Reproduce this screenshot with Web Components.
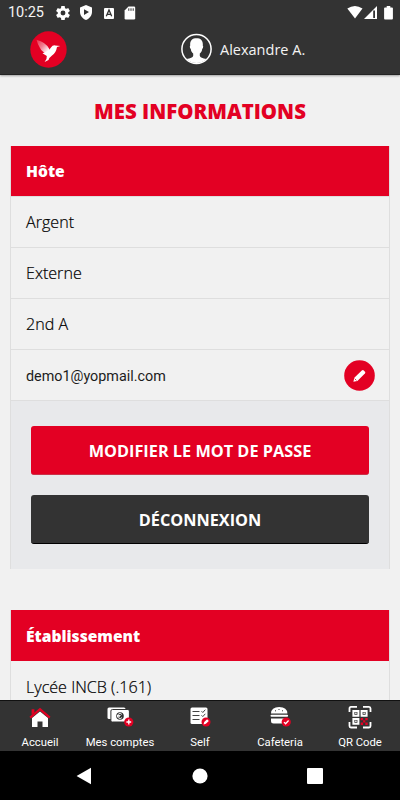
<!DOCTYPE html>
<html lang="fr">
<head>
<meta charset="utf-8">
<meta name="viewport" content="width=device-width, initial-scale=1">
<title>Mes informations</title>
<style>
  html, body {
    margin: 0;
    height: 100%;
    overflow: hidden;
  }
  body {
    font-family: "Open Sans", "Noto Sans", sans-serif;
    background: #f1f1f1;
    --red: #e30023;
    --dark: #333;
    --line: #dedede;
  }
</style>
</head>
<body>
<account-app></account-app>

<script>
const define = (name, html, setup) => {
  const template = document.createElement("template");
  template.innerHTML = html;

  window.customElements.define(name, class extends HTMLElement {
    constructor() {
      super();
      this._sR = this.attachShadow({ mode: "open" });
      this._sR.appendChild(template.content.cloneNode(true));
    }

    connectedCallback() {
      if (setup) setup(this, this._sR);
    }
  });
};

define("status-bar", `
  <style>
    :host {
      display: flex;
      align-items: center;
      height: 24px;
      padding: 1px 7px 0 8px;
      box-sizing: border-box;
      color: #f4f4f4;
      font: 14.5px Roboto, sans-serif;
    }
    svg { display: block; fill: #fff; }
    .time { width: 47.5px; letter-spacing: -0.05px; }
    .left { display: flex; align-items: center; gap: 9.5px; }
    .right { display: flex; align-items: center; margin-left: auto; }
  </style>
  <span class="time">10:25</span>
  <div class="left">
    <svg width="14" height="14" viewBox="2 2 20 20"><path d="M19.43 12.98c.04-.32.07-.64.07-.98s-.03-.66-.07-.98l2.11-1.65c.19-.15.24-.42.12-.64l-2-3.46c-.12-.22-.39-.3-.61-.22l-2.49 1c-.52-.4-1.08-.73-1.69-.98l-.38-2.65C14.46 2.18 14.25 2 14 2h-4c-.25 0-.46.18-.49.42l-.38 2.65c-.61.25-1.17.59-1.69.98l-2.49-1c-.23-.09-.49 0-.61.22l-2 3.46c-.13.22-.07.49.12.64l2.11 1.65c-.04.32-.07.65-.07.98s.03.66.07.98l-2.11 1.65c-.19.15-.24.42-.12.64l2 3.46c.12.22.39.3.61.22l2.49-1c.52.4 1.08.73 1.69.98l.38 2.65c.03.24.24.42.49.42h4c.25 0 .46-.18.49-.42l.38-2.65c.61-.25 1.17-.59 1.69-.98l2.49 1c.23.09.49 0 .61-.22l2-3.46c.12-.22.07-.49-.12-.64l-2.11-1.65zM12 15.5A3.5 3.5 0 1 1 12 8.500a3.500 3.500 0 0 1 0 7z"/></svg>
    <svg width="14" height="15" viewBox="0 0 14 15"><path fill-rule="evenodd" d="M7 0L13 2.400V7c0 3.600-2.500 6.700-6 8C3.500 13.700 1 10.600 1 7V2.400zM5 4.200v5.700L10 7z"/></svg>
    <svg width="12" height="12" viewBox="0 0 12 12"><rect x="1" y="1" width="10" height="11" rx="1"/><path d="M3.300 9.200L6 3l2.700 6.200M4.400 7.300h3.200" fill="none" stroke="#333" stroke-width="1.300"/></svg>
    <svg width="12" height="14" viewBox="0 0 12 14"><path d="M4.500.500H10q1.200 0 1.200 1.200v10.600q0 1.200-1.200 1.200H1.800Q.6 13.500.6 12.300V4.500z"/><path d="M4.800 2.300v2.500M7 2.300v2.500M9.200 2.300v2.500" stroke="#333"/></svg>
  </div>
  <div class="right">
    <svg width="16" height="13" viewBox="0 0 16 13"><path d="M.3 2.600Q8-2.400 15.500 2.600L8 12.600z"/></svg>
    <svg width="14" height="13" viewBox="0 0 14 13" style="margin-left:1px"><path d="M0 13L13 0v13z"/><path d="M9.200 4.600H11V12H9.200z" fill="#333"/></svg>
    <svg width="9" height="14" viewBox="0 0 9 14" style="margin-left:6px"><path d="M2.700 0h3.600v1.400H8q.9 0 .9.900v10.300q0 .9-.9.900H1q-.9 0-.9-.9V2.300q0-.9.900-.9h1.700z"/></svg>
  </div>
`);

define("app-header", `
  <style>
    :host {
      display: grid;
      grid-template-columns: 151px 1fr;
      align-items: center;
      height: 51px;
      padding: 0 30px;
      box-sizing: border-box;
      border-bottom: 1px solid #242424;
      color: #f4f4f4;
    }
    svg { display: block; }
    .logo { margin-top: 1px; }
    .user {
      display: flex;
      align-items: center;
      gap: 8px;
      font-size: 14.5px;
      font-weight: 400;
    }
    .name { padding-top: 1px; }
  </style>
  <svg class="logo" width="37" height="37" viewBox="0 0 37 37">
    <defs><linearGradient id="wing" x1="0" y1="0" x2="1" y2="1"><stop offset="0" stop-color="#fff" stop-opacity=".2"/><stop offset=".45" stop-color="#fff" stop-opacity=".5"/><stop offset=".85" stop-color="#fff"/></linearGradient></defs>
    <circle cx="18.500" cy="18.500" r="18.200" fill="#e30023"/>
    <path d="M6.500 8.800Q15.500 11 19.500 18.200L17.500 23Q12 21 10 17Q7.500 13 6.500 8.800z" fill="url(#wing)"/>
    <path d="M16.800 20.500Q20 18.500 21 16.600Q22.500 14 25.200 14.400L30.300 15L27 16Q26 22 22 24.500Q19.500 26.300 18.500 29L14.600 31Q17.300 27.500 16.800 24.900L12.500 22.200z" fill="#fff"/>
  </svg>
  <div class="user">
    <svg width="31" height="32" viewBox="0 0 31 32">
      <defs><clipPath id="face"><circle cx="15.500" cy="16" r="14"/></clipPath></defs>
      <circle cx="15.500" cy="16" r="14.600" fill="none" stroke="#fff" stroke-width="1.500"/>
      <path clip-path="url(#face)" d="M15.500 5.300C11.200 5.300 8.800 7.500 9.200 12.700C8.500 12.800 8.900 15.600 9.800 15.900C10 18 11 19.400 12.200 20.500V23Q11.500 25 5.500 26V32h20v-6Q19.500 25 18.800 23v-2.500C20 19.400 21 18 21.200 15.900C22.100 15.600 22.500 12.800 21.800 12.700C22.200 7.500 19.800 5.300 15.500 5.300z" fill="#fff"/>
    </svg>
    <span class="name"><slot></slot></span>
  </div>
`);

define("info-card", `
  <style>
    :host {
      display: block;
      margin: 0 10px 0;
      border: solid var(--line);
      border-width: 0 1px;
    }
    h2 {
      display: flex;
      align-items: center;
      height: 51px;
      margin: 0;
      padding: 0 15px;
      box-sizing: border-box;
      background: var(--red);
      color: #fff;
      font-size: 15.6px;
      font-weight: 800;
    }
    :host([divided]) h2 { border-bottom: 1px solid var(--line); }
  </style>
  <h2></h2>
  <slot></slot>
`, (el, root) => {
  root.querySelector("h2").textContent = el.getAttribute("heading");
});

define("info-row", `
  <style>
    :host {
      display: flex;
      align-items: center;
      justify-content: space-between;
      height: 51px;
      padding: 0 15px;
      box-sizing: border-box;
      border-bottom: 1px solid var(--line);
      color: #000;
      font-size: 16.1px;
      font-weight: 300;
      -webkit-text-stroke: .2px #000;
    }
    :host([mail]) {
      padding-top: 2px;
      color: #1c1c1c;
      font: 14.35px Roboto, sans-serif;
      -webkit-text-stroke: 0;
    }
  </style>
  <slot></slot>
  <slot name="action"></slot>
`);

define("edit-button", `
  <style>
    :host { display: block; width: 31px; height: 31px; margin: -2px -.5px 0 0; }
    svg { display: block; }
  </style>
  <svg width="31" height="31" viewBox="0 0 31 31">
    <circle cx="15.500" cy="15.500" r="15.300" fill="#e30023"/>
    <path d="M9.400 21.800L10.300 17.700L17.800 10.400Q18.800 9.500 19.800 10.400L21 11.700Q21.800 12.700 20.900 13.600L13.400 21z" fill="#fff"/>
    <path d="M10.700 18.700l1.700 1.700" stroke="#e30023" stroke-width=".8"/>
  </svg>
`);

define("action-button", `
  <style>
    :host { display: block; }
    button {
      display: block;
      width: 100%;
      height: 49px;
      padding: 2px 0 0;
      border: 0;
      border-bottom: 1px solid #ca3148;
      border-radius: 3px;
      background: var(--red);
      color: #fff;
      font: 700 16.3px "Open Sans", sans-serif;
    }
    :host([dark]) button {
      background: var(--dark);
      border-color: #000;
    }
  </style>
  <button><slot></slot></button>
`);

define("action-panel", `
  <style>
    :host {
      display: flex;
      flex-direction: column;
      gap: 20px;
      height: 168px;
      padding: 25px 20px 0;
      box-sizing: border-box;
      background: #e8e9eb;
    }
  </style>
  <slot></slot>
`);

define("tab-item", `
  <style>
    :host {
      display: flex;
      flex-direction: column;
      align-items: center;
      color: #fff;
      font: 11.3px/14px Roboto, sans-serif;
    }
    .icon { height: 29px; padding-top: 4px; box-sizing: border-box; margin-bottom: 6px; }
  </style>
  <div class="icon"><slot name="icon"></slot></div>
  <slot></slot>
`);

define("tab-bar", `
  <style>
    :host {
      display: grid;
      grid-template-columns: repeat(5, 1fr);
      height: 51px;
      box-sizing: border-box;
      border-top: 1px solid #111;
      background: var(--dark);
    }
  </style>
  <slot></slot>
`);

define("system-nav", `
  <style>
    :host {
      display: flex;
      align-items: center;
      justify-content: space-between;
      height: 49px;
      padding: 0 77px 0 76px;
      box-sizing: border-box;
      background: #000;
    }
    svg { display: block; fill: #fff; }
  </style>
  <svg width="16" height="18" viewBox="0 0 16 18"><path d="M15 .8v16.400L.6 9z"/></svg>
  <svg width="16" height="16" viewBox="0 0 16 16"><circle cx="8" cy="8" r="7.600"/></svg>
  <svg width="16" height="16" viewBox="0 0 16 16"><rect width="16" height="16" rx="1"/></svg>
`);

define("account-app", `
  <style>
    :host {
      display: flex;
      flex-direction: column;
      height: 100%;
    }
    header { background: var(--dark); box-shadow: 0 1px 2px #0005; z-index: 1; }
    main { flex: 1; min-height: 0; overflow: hidden; }
    h1 {
      height: 71px;
      margin: 0;
      color: var(--red);
      font-size: 20.4px;
      font-weight: 800;
      line-height: 73px;
      text-align: center;
    }
    info-card + info-card { margin-top: 41px; }
    .tabs svg { display: block; }
  </style>
  <header>
    <status-bar></status-bar>
    <app-header>Alexandre A.</app-header>
  </header>
  <main>
    <h1>MES INFORMATIONS</h1>
    <info-card heading="Hôte" divided>
      <info-row>Argent</info-row>
      <info-row>Externe</info-row>
      <info-row>2nd A</info-row>
      <info-row mail>demo1@yopmail.com<edit-button slot="action"></edit-button></info-row>
      <action-panel>
        <action-button>MODIFIER LE MOT DE PASSE</action-button>
        <action-button dark>DÉCONNEXION</action-button>
      </action-panel>
    </info-card>
    <info-card heading="Établissement">
      <info-row style="padding-top: 1px">Lycée INCB (.161)</info-row>
    </info-card>
  </main>
  <tab-bar class="tabs">
    <tab-item>Accueil
      <svg slot="icon" width="22" height="22" viewBox="0 0 22 22">
        <path d="M3 13L11 6.500l8 6.500v9h-5.500v-5.500h-5V22H3z" fill="#fff"/>
        <path d="M1.200 12.600L11 4.200l9.800 8.400" fill="none" stroke="#e30023" stroke-width="2.200"/>
        <path d="M2.600 4.200h2.800v3.300L2.600 9.800z" fill="#e30023"/>
      </svg>
    </tab-item>
    <tab-item>Mes comptes
      <svg slot="icon" width="27" height="22" viewBox="0 0 27 22">
        <rect x=".5" y="2.500" width="18" height="11.500" rx="1.500" fill="#fff"/>
        <rect x="3.900" y="4.500" width="18.500" height="12.500" rx="1.500" fill="#fff" stroke="#333"/>
        <circle cx="13" cy="11" r="3.800" fill="#333"/>
        <path d="M14.900 9.400a2.500 2.500 0 1 0 0 3.200M10 10.500h3.600M10 11.700h3" fill="none" stroke="#fff" stroke-width=".9"/>
        <circle cx="21.800" cy="17" r="4.600" fill="#e30023"/>
        <path d="M19.400 17h4.800M21.800 14.600v4.800" stroke="#fff" stroke-width="1.300"/>
      </svg>
    </tab-item>
    <tab-item>Self
      <svg slot="icon" width="21" height="22" viewBox="0 0 21 22">
        <rect x=".500" y="2.500" width="17" height="16.500" rx="1.500" fill="#fff"/>
        <path d="M2.500 6.500h7M2.500 10.500h7M2.500 14.500h7M11.500 6.200l1.300 1.300 2.500-2.800M11.500 10.300l1.300 1.300 2.500-2.800" fill="none" stroke="#444" stroke-width="1"/>
        <circle cx="16" cy="17" r="4.500" fill="#e30023"/>
        <path d="M13.600 19.400l.6-2.300 2.900-2.800 1.700 1.700-2.900 2.800z" fill="#fff"/>
      </svg>
    </tab-item>
    <tab-item>Cafeteria
      <svg slot="icon" width="21" height="22" viewBox="0 0 21 22">
        <path d="M1 8.500Q1.200 2 9.200 2T17.400 8.500z" fill="#fff"/>
        <path d="M5 5.800h1M8.500 4.500h1M12 5.800h1" stroke="#333"/>
        <path d="M1.500 10.800h15.600" stroke="#fff" stroke-width="2" stroke-linecap="round"/>
        <path d="M1 13.400h16.500v2.500q0 2.500-2.500 2.500h-11.500Q1 18.400 1 15.900z" fill="#fff"/>
        <circle cx="16.200" cy="17" r="4.600" fill="#e30023"/>
        <path d="M14 17.100l1.600 1.600 3-3.200" fill="none" stroke="#fff" stroke-width="1.300"/>
      </svg>
    </tab-item>
    <tab-item>QR Code
      <svg slot="icon" width="24" height="24" viewBox="0 0 24 24">
        <g fill="none" stroke="#fff" stroke-width="1.800">
          <path d="M1.500 7V3.500Q1.500 1.900 3 1.900h6M15 1.900h6q1.500 0 1.500 1.600V7M1.500 17v4q0 1.500 1.500 1.500h6M15 22.500h6q1.500 0 1.500-1.500v-4"/>
          <path d="M5.400 5.900h5v4.800h-5zM13.600 5.900h5v4.800h-5zM5.400 13.900h5v4.800h-5z" stroke-width="2"/>
        </g>
        <path d="M7.200 7.600h1.400V9H7.200zM15.400 7.600h1.400V9h-1.400zM7.200 15.600h1.400V17H7.200z" fill="#fff"/>
        <path d="M12.700 12.900h2.400v2.300h2.200v-2.300h2.400v2.300h-2.400v2.300h2.400v2.400h-2.400v-2.400h-2.200v2.400h-2.400v-2.400h2.400v-2.300h-2.400z" fill="#e30023"/>
      </svg>
    </tab-item>
  </tab-bar>
  <system-nav></system-nav>
`);
</script>
</body>
</html>
